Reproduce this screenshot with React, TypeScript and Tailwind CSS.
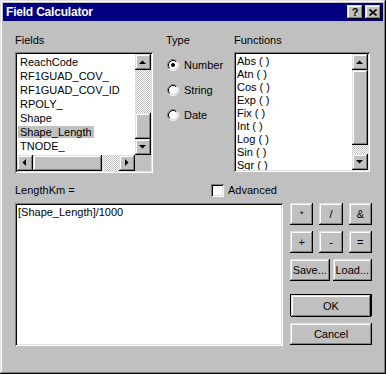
import React from 'react'

const raised =
  'bg-[#c0c0c0] shadow-[inset_-1px_-1px_#000000,inset_1px_1px_#dfdfdf,inset_-2px_-2px_#808080,inset_2px_2px_#ffffff]'
const sunken =
  'shadow-[inset_1px_1px_#808080,inset_-1px_-1px_#ffffff,inset_2px_2px_#000000,inset_-2px_-2px_#dfdfdf]'
const dither = 'bg-[repeating-conic-gradient(#c0c0c0_0_25%,#ffffff_0_50%)] bg-[length:2px_2px]'

type Dir = 'up' | 'down' | 'left' | 'right'

function ArrowBtn({ dir }: { dir: Dir }) {
  const pts: Record<Dir, string> = {
    up: '4,10 11,10 7.5,6.5',
    down: '4,6 11,6 7.5,9.5',
    left: '9,4 9,11 5.5,7.5',
    right: '6,4 6,11 9.5,7.5',
  }
  return (
    <div className={`w-[16px] h-[16px] shrink-0 ${raised}`}>
      <svg width="16" height="16" viewBox="0 0 16 16">
        <polygon points={pts[dir]} fill="#000" />
      </svg>
    </div>
  )
}

function Radio({ checked, label }: { checked?: boolean; label: string }) {
  return (
    <div className="flex items-center h-[14px]">
      <svg width="12" height="12" viewBox="0 0 12 12" className="ml-[1px]">
        <circle cx="6" cy="6" r="4.5" fill="#fff" />
        <path d="M2.11 9.89 A5.5 5.5 0 0 1 9.89 2.11" stroke="#808080" fill="none" />
        <path d="M9.89 2.11 A5.5 5.5 0 0 1 2.11 9.89" stroke="#ffffff" fill="none" />
        <path d="M2.82 9.18 A4.5 4.5 0 0 1 9.18 2.82" stroke="#000000" fill="none" />
        <path d="M9.18 2.82 A4.5 4.5 0 0 1 2.82 9.18" stroke="#dfdfdf" fill="none" />
        {checked && <circle cx="6" cy="6" r="2" fill="#000" />}
      </svg>
      <span className="ml-[5px]">{label}</span>
    </div>
  )
}

function Btn({ children, className = '' }: { children: React.ReactNode; className?: string }) {
  return (
    <div className={`h-[22px] flex items-center justify-center ${raised} ${className}`}>{children}</div>
  )
}

const fields = ['ReachCode', 'RF1GUAD_COV_', 'RF1GUAD_COV_ID', 'RPOLY_', 'Shape', 'Shape_Length', 'TNODE_']
const functions = ['Abs ( )', 'Atn ( )', 'Cos ( )', 'Exp ( )', 'Fix ( )', 'Int ( )', 'Log ( )', 'Sin ( )', 'Sqr ( )']

export default function App() {
  return (
    <div
      className="w-[386px] h-[374px] p-[3px] bg-[#c0c0c0] text-black text-[11px] leading-[13px] font-['Liberation_Sans',Arial,sans-serif] shadow-[inset_-1px_-1px_#000000,inset_1px_1px_#dfdfdf,inset_-2px_-2px_#808080,inset_2px_2px_#ffffff]"
    >
      {/* Title bar */}
      <div className="h-[18px] bg-[#000080] flex items-center pl-[3px] pr-[2px]">
        <span className="text-white font-bold text-[12px] tracking-[-0.2px]">Field Calculator</span>
        <div className="ml-auto flex gap-[2px]">
          <div className={`w-[16px] h-[14px] flex items-center justify-center font-bold text-[11px] leading-none ${raised}`}>
            ?
          </div>
          <div className={`w-[16px] h-[14px] flex items-center justify-center ${raised}`}>
            <svg width="8" height="7" viewBox="0 0 8 7">
              <path d="M0.5 0.5 L7.5 6.5 M7.5 0.5 L0.5 6.5" stroke="#000" strokeWidth="1.6" />
            </svg>
          </div>
        </div>
      </div>

      <div className="pl-[12px] pt-[13px]">
        <div className="flex">
          {/* Fields */}
          <div className="w-[138px]">
            <div className="h-[13px]">Fields</div>
            <div className={`mt-[5px] h-[121px] bg-white p-[2px] ${sunken}`}>
              <div className="flex h-[101px]">
                <div className="flex-1 pt-[1px] pl-[1px] overflow-hidden">
                  {fields.map((f) => (
                    <div key={f} className="h-[14px] leading-[14px]">
                      <span className={`px-[2px] ${f === 'Shape_Length' ? 'bg-[#c0c0c0]' : ''}`}>{f}</span>
                    </div>
                  ))}
                </div>
                <div className="w-[16px] flex flex-col">
                  <ArrowBtn dir="up" />
                  <div className={`h-[43px] ${dither}`} />
                  <div className={`h-[26px] ${raised}`} />
                  <ArrowBtn dir="down" />
                </div>
              </div>
              <div className="flex h-[16px]">
                <ArrowBtn dir="left" />
                <div className={`w-[69px] ${raised}`} />
                <div className={`flex-1 ${dither}`} />
                <ArrowBtn dir="right" />
                <div className="w-[16px] bg-[#c0c0c0]" />
              </div>
            </div>
          </div>

          {/* Type */}
          <div className="ml-[13px] w-[68px]">
            <div className="h-[13px]">Type</div>
            <div className="mt-[11px] flex flex-col gap-[11px]">
              <Radio checked label="Number" />
              <Radio label="String" />
              <Radio label="Date" />
            </div>
          </div>

          {/* Functions */}
          <div className="w-[136px]">
            <div className="h-[13px]">Functions</div>
            <div className={`mt-[5px] h-[120px] bg-white p-[2px] flex ${sunken}`}>
              <div className="flex-1 pl-[1px] pt-[1px] overflow-hidden">
                {functions.map((f) => (
                  <div key={f} className="h-[13px] whitespace-pre">
                    {f}
                  </div>
                ))}
              </div>
              <div className="w-[16px] flex flex-col">
                <ArrowBtn dir="up" />
                <div className={`h-[75px] ${raised}`} />
                <div className={`h-[9px] ${dither}`} />
                <ArrowBtn dir="down" />
              </div>
            </div>
          </div>
        </div>

        {/* Expression label + Advanced */}
        <div className="mt-[11px] h-[13px] flex items-center">
          <span className="w-[196px]">LengthKm =</span>
          <div className={`w-[13px] h-[13px] bg-white ${sunken}`} />
          <span className="ml-[4px]">Advanced</span>
        </div>

        <div className="mt-[6px] flex">
          <div className={`w-[268px] h-[143px] bg-white pt-[3px] pl-[3px] ${sunken}`}>[Shape_Length]/1000</div>

          <div className="ml-[7px] w-[82px] flex flex-col">
            <div className="grid grid-cols-3 gap-[6px]">
              <Btn>
                <span className="text-[9px]">*</span>
              </Btn>
              <Btn>/</Btn>
              <Btn>&amp;</Btn>
            </div>
            <div className="mt-[6px] grid grid-cols-3 gap-[6px]">
              <Btn>+</Btn>
              <Btn>-</Btn>
              <Btn>=</Btn>
            </div>
            <div className="mt-[6px] grid grid-cols-2 gap-[3px]">
              <Btn>Save...</Btn>
              <Btn>Load...</Btn>
            </div>
            <div className="mt-[13px] h-[22px] border border-black">
              <Btn className="h-[20px]">OK</Btn>
            </div>
            <Btn className="mt-[7px]">Cancel</Btn>
          </div>
        </div>
      </div>
    </div>
  )
}
